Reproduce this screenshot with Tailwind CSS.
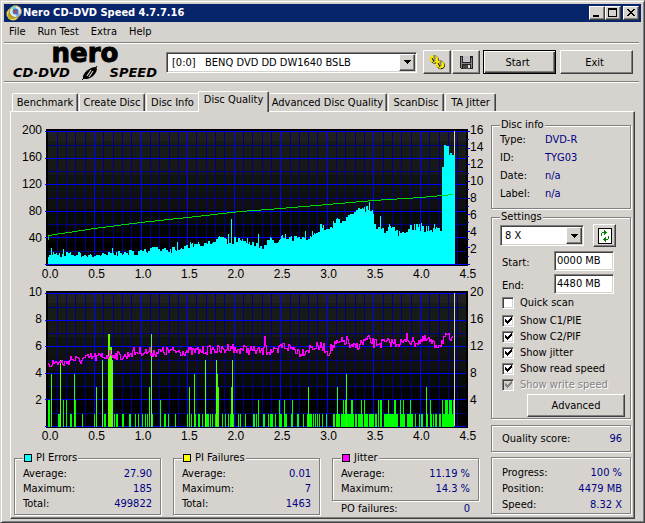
<!DOCTYPE html>
<html lang="en">
<head>
    <meta charset="UTF-8">
    <meta name="viewport" content="width=device-width, initial-scale=1.0">
    <title>Nero CD-DVD Speed 4.7.7.16</title>
    <script src="https://cdn.jsdelivr.net/npm/@tailwindcss/browser@4"></script>
</head>
<body class="bg-[#d6d3ce] font-['DejaVu_Sans_Condensed','DejaVu_Sans',sans-serif] text-[11px] leading-[14px] text-black">
<div class="flex min-h-screen flex-col border border-t-[#d6d3ce] border-l-[#d6d3ce] border-r-[#404040] border-b-[#404040] p-[3px] shadow-[inset_1px_1px_0_#fff,inset_-1px_-1px_0_#808080]">

    <!-- Title bar -->
    <header class="flex h-[18px] items-center bg-[#08246b] px-[2px] text-white">
        <svg class="h-4 w-4" viewBox="0 0 16 16">
            <circle cx="7" cy="9" r="6.5" fill="#e8d44c"/>
            <circle cx="6" cy="10" r="4" fill="#b8a020"/>
            <circle cx="9.500" cy="6.500" r="6" fill="#dfe8ee" stroke="#a08c20"/>
            <path d="M9.500 6.500L5 3a6 6 0 0 1 5-2z" fill="#7fd0c8"/>
            <path d="M9.500 6.500L14.500 9a6 6 0 0 1-4 3z" fill="#86a8e0"/>
            <circle cx="9.500" cy="6.500" r="3" fill="#3b74c0"/>
            <circle cx="9.500" cy="6.500" r="1.300" fill="#d83a20"/>
        </svg>
        <h1 class="flex-1 pl-px font-bold">Nero CD-DVD Speed 4.7.7.16</h1>
        <button aria-label="Minimize" class="h-[14px] w-4 border border-t-white border-l-white border-r-[#404040] border-b-[#404040] bg-[#d6d3ce] shadow-[inset_-1px_-1px_0_#808080]">
            <svg class="h-3 w-[14px]" viewBox="0 0 14 12" shape-rendering="crispEdges"><path d="M3 8h6v2H3z"/></svg>
        </button>
        <button aria-label="Maximize" class="h-[14px] w-4 border border-t-white border-l-white border-r-[#404040] border-b-[#404040] bg-[#d6d3ce] shadow-[inset_-1px_-1px_0_#808080]">
            <svg class="h-3 w-[14px]" viewBox="0 0 14 12" shape-rendering="crispEdges"><path d="M2 1h9v9H2zM3 3v6h7V3z" fill-rule="evenodd"/></svg>
        </button>
        <button aria-label="Close" class="ml-[2px] h-[14px] w-4 border border-t-white border-l-white border-r-[#404040] border-b-[#404040] bg-[#d6d3ce] shadow-[inset_-1px_-1px_0_#808080]">
            <svg class="h-3 w-[14px]" viewBox="0 0 14 12" shape-rendering="crispEdges"><path d="M3 2h2v1h1v1h2V3h1V2h2v1h-1v1H9v1H8v1h1v1h1v1h1v1H9V8H8V7H6v1H5v1H3V8h1V7h1V6h1V5H5V4H4V3H3z"/></svg>
        </button>
    </header>

    <nav class="flex h-5 items-center gap-3 px-[5px]">
        <button>File</button>
        <button>Run Test</button>
        <button>Extra</button>
        <button>Help</button>
    </nav>

    <!-- Toolbar -->
    <div class="mr-[2px] flex h-10 items-center border-y border-[#808080] pl-[9px] pr-[6px] shadow-[0_1px_0_#fff,inset_0_1px_0_#fff]">
        <div class="w-36 font-['DejaVu_Sans',sans-serif] font-bold">
            <div class="-mt-[2px] text-center text-[26px] leading-[22px] [-webkit-text-stroke:1px_#000]">nero</div>
            <div class="mt-[2px] flex h-[14px] items-center justify-between text-[13px] leading-[14px] italic">
                <span>CD·DVD</span>
                <svg class="h-[14px] w-4" viewBox="0 0 16 14">
                    <path d="M1 12C0 8 7 1 14 1c3 2-2 11-9 12-2 0-3 0-4-1z"/>
                    <path d="M9 4L5 10M11 5L7 11" stroke="#d6d3ce" stroke-width="1.200"/>
                    <path d="M0 14L4 10M12 4l3-4" stroke="#000"/>
                </svg>
                <span>SPEED</span>
            </div>
        </div>
        <div class="relative ml-[9px] h-[21px] flex-1">
            <select aria-label="Drive" class="h-full w-full appearance-none whitespace-pre border border-t-[#808080] border-l-[#808080] border-r-white border-b-white bg-white pt-[2px] pl-[5px] shadow-[inset_1px_1px_0_#404040,inset_-1px_-1px_0_#d6d3ce]">
                <option>[0:0] &nbsp; BENQ DVD DD DW1640 BSLB</option>
            </select>
            <span class="pointer-events-none absolute top-[2px] right-[2px] flex h-[17px] w-4 items-center justify-center border border-t-white border-l-white border-r-[#404040] border-b-[#404040] bg-[#d6d3ce] shadow-[inset_-1px_-1px_0_#808080]">
                <svg class="h-1 w-[7px]" viewBox="0 0 7 4" shape-rendering="crispEdges"><path d="M0 0h7v1H6v1H5v1H4v1H3V3H2V2H1V1H0z"/></svg>
            </span>
        </div>
        <button aria-label="Options" class="ml-[6px] flex h-6 w-7 items-center justify-center border border-t-white border-l-white border-r-[#404040] border-b-[#404040] shadow-[inset_-1px_-1px_0_#808080]">
            <svg class="h-4 w-[17px]" viewBox="0 0 17 16">
                <ellipse cx="5.500" cy="5.500" rx="4.500" ry="4" fill="#000" transform="rotate(30 5.500 5.500)"/>
                <ellipse cx="11.500" cy="11" rx="4.500" ry="4" fill="#000" transform="rotate(30 11.500 11)"/>
                <ellipse cx="5" cy="5" rx="4" ry="3.500" fill="#ffee00" stroke="#ffee00" stroke-dasharray="2 1" transform="rotate(30 5 5)"/>
                <ellipse cx="11" cy="10.500" rx="4" ry="3.500" fill="#ffee00" stroke="#ffee00" stroke-dasharray="2 1" transform="rotate(30 11 10.500)"/>
                <path d="M5.500 1v6M11.500 6v6" stroke="#848284" stroke-width="2"/>
                <path d="M3 4l2 4M9 9l2 4" stroke="#000" stroke-width="1"/>
            </svg>
        </button>
        <button aria-label="Save" class="ml-px flex h-6 w-7 items-center justify-center border border-t-white border-l-white border-r-[#404040] border-b-[#404040] shadow-[inset_-1px_-1px_0_#808080]">
            <svg class="h-[13px] w-[13px]" viewBox="0 0 13 13" shape-rendering="crispEdges">
                <path d="M0 0h13v13H1l-1-1z" fill="#222"/>
                <path d="M1 1h1v11H1zM11 2h1v10h-1z" fill="#848284"/>
                <path d="M3 0h7v6H3z" fill="#c6c3c6"/>
                <path d="M2 7h9v1H2z" fill="#848284"/>
                <path d="M3 9h7v4H3z" fill="#444"/>
                <path d="M8 9h2v3H8z" fill="#dedede"/>
            </svg>
        </button>
        <button class="ml-[3px] h-6 w-[73px] border border-black pt-px pr-1 shadow-[inset_1px_1px_0_#fff,inset_-1px_-1px_0_#404040,inset_-2px_-2px_0_#808080]">Start</button>
        <button class="ml-1 h-6 w-[73px] border border-t-white border-l-white border-r-[#404040] border-b-[#404040] pt-px pr-1 shadow-[inset_-1px_-1px_0_#808080]">Exit</button>
    </div>

    <!-- Tabs -->
    <div role="tablist" class="mt-[9px] flex h-5 items-end px-2 whitespace-nowrap">
        <button role="tab" class="h-[18px] w-[66px] rounded-t-xs border-t border-r border-l border-white border-r-[#404040] shadow-[inset_-1px_0_0_#808080]">Benchmark</button>
        <button role="tab" class="ml-px h-[18px] w-[66px] rounded-t-xs border-t border-r border-l border-white border-r-[#404040] shadow-[inset_-1px_0_0_#808080]">Create Disc</button>
        <button role="tab" class="ml-px h-[18px] w-[52px] rounded-tl-xs border-t border-l border-white">Disc Info</button>
        <button role="tab" aria-selected="true" class="relative -mb-px h-[21px] w-[71px] rounded-t-xs border-t border-r border-l border-white border-r-[#404040] bg-[#d6d3ce] pb-1 shadow-[inset_-1px_0_0_#808080]">Disc Quality</button>
        <button role="tab" class="h-[18px] w-[118px] rounded-t-xs border-t border-r border-white border-r-[#404040] shadow-[inset_-1px_0_0_#808080]">Advanced Disc Quality</button>
        <button role="tab" class="ml-px h-[18px] w-[56px] rounded-t-xs border-t border-r border-l border-white border-r-[#404040] shadow-[inset_-1px_0_0_#808080]">ScanDisc</button>
        <button role="tab" class="ml-px h-[18px] w-[51px] rounded-t-xs border-t border-r border-l border-white border-r-[#404040] shadow-[inset_-1px_0_0_#808080]">TA Jitter</button>
    </div>

    <main class="mr-[6px] ml-[6px] flex flex-1 border border-t-white border-l-white border-r-[#404040] border-b-[#404040] shadow-[inset_-1px_-1px_0_#808080]">
        <div class="flex flex-1 flex-col pt-[5px]">

            <!-- PI errors / read speed -->
            <div class="flex font-['Liberation_Sans',sans-serif] text-xs">
                <div class="w-[35px] pr-1 text-right leading-[27px]">
                    <div>200</div><div>160</div><div>120</div><div>80</div><div>40</div>
                </div>
                <svg id="errors" class="mt-3 h-[137px] flex-1 overflow-visible" viewBox="0 0 422 137" preserveAspectRatio="none" shape-rendering="crispEdges"></svg>
                <div class="mt-[5px] flex h-[134px] w-[23px] flex-col pl-[2px] leading-[17px]">
                    <div class="flex-1">16</div><div class="flex-1">14</div><div class="flex-1">12</div><div class="flex-1">10</div><div class="flex-1">8</div><div class="flex-1">6</div><div class="flex-1">4</div><div class="flex-1">2</div>
                </div>
            </div>
            <div class="grid h-[13px] grid-cols-10 pl-4 text-center font-['Liberation_Sans',sans-serif] text-xs leading-4">
                <span>0.0</span><span>0.5</span><span>1.0</span><span>1.5</span><span>2.0</span><span>2.5</span><span>3.0</span><span>3.5</span><span>4.0</span><span>4.5</span>
            </div>

            <!-- PI failures / jitter -->
            <div class="flex font-['Liberation_Sans',sans-serif] text-xs">
                <div class="w-[35px] pr-1 text-right leading-[27px]">
                    <div>10</div><div>8</div><div>6</div><div>4</div><div>2</div>
                </div>
                <svg id="failures" class="mt-3 h-[137px] flex-1 overflow-visible" viewBox="0 0 422 137" preserveAspectRatio="none" shape-rendering="crispEdges"></svg>
                <div class="w-[23px] pl-[2px] leading-[27px]">
                    <div>20</div><div>16</div><div>12</div><div>8</div><div>4</div>
                </div>
            </div>
            <div class="grid h-[13px] grid-cols-10 pl-4 text-center font-['Liberation_Sans',sans-serif] text-xs leading-4">
                <span>0.0</span><span>0.5</span><span>1.0</span><span>1.5</span><span>2.0</span><span>2.5</span><span>3.0</span><span>3.5</span><span>4.0</span><span>4.5</span>
            </div>

            <div class="mt-[10px] grid grid-cols-3 items-start gap-3 pr-3 pl-[3px]">
                <fieldset class="h-[64px] border border-[#808080] px-2 shadow-[1px_1px_0_#fff,inset_1px_1px_0_#fff]">
                    <legend class="flex items-center gap-1 bg-[#d6d3ce] px-px"><span class="h-2 w-2 border border-black bg-[#00ffff]"></span>PI Errors</legend>
                    <dl class="mt-px grid grid-cols-2 leading-[15px]">
                        <dt>Average:</dt><dd class="text-right text-[#000084]">27.90</dd>
                        <dt>Maximum:</dt><dd class="text-right text-[#000084]">185</dd>
                        <dt>Total:</dt><dd class="text-right text-[#000084]">499822</dd>
                    </dl>
                </fieldset>
                <fieldset class="h-[64px] border border-[#808080] px-2 shadow-[1px_1px_0_#fff,inset_1px_1px_0_#fff]">
                    <legend class="flex items-center gap-1 bg-[#d6d3ce] px-px"><span class="h-2 w-2 border border-black bg-[#ffff00]"></span>PI Failures</legend>
                    <dl class="mt-px grid grid-cols-2 leading-[15px]">
                        <dt>Average:</dt><dd class="text-right text-[#000084]">0.01</dd>
                        <dt>Maximum:</dt><dd class="text-right text-[#000084]">7</dd>
                        <dt>Total:</dt><dd class="text-right text-[#000084]">1463</dd>
                    </dl>
                </fieldset>
                <div>
                    <fieldset class="h-[50px] border border-[#808080] px-2 shadow-[1px_1px_0_#fff,inset_1px_1px_0_#fff]">
                        <legend class="flex items-center gap-1 bg-[#d6d3ce] px-px"><span class="h-2 w-2 border border-black bg-[#ff00ff]"></span>Jitter</legend>
                        <dl class="mt-px grid grid-cols-2 leading-[15px]">
                            <dt>Average:</dt><dd class="text-right text-[#000084]">11.19 %</dd>
                            <dt>Maximum:</dt><dd class="text-right text-[#000084]">14.3 %</dd>
                        </dl>
                    </fieldset>
                    <div class="flex justify-between px-[9px] pt-px"><span>PO failures:</span><span class="text-[#000084]">0</span></div>
                </div>
            </div>
        </div>

        <aside class="mr-[3px] flex w-[140px] flex-col pt-[6px]">
            <fieldset class="h-[91px] border border-[#808080] px-2 shadow-[1px_1px_0_#fff,inset_1px_1px_0_#fff]">
                <legend class="bg-[#d6d3ce] px-px">Disc info</legend>
                <dl class="-mt-px grid grid-cols-[45px_1fr] leading-[18px]">
                    <dt>Type:</dt><dd class="text-[#000084]">DVD-R</dd>
                    <dt>ID:</dt><dd class="text-[#000084]">TYG03</dd>
                    <dt>Date:</dt><dd class="text-[#000084]">n/a</dd>
                    <dt>Label:</dt><dd class="text-[#000084]">n/a</dd>
                </dl>
            </fieldset>

            <fieldset class="mt-px h-[209px] border border-[#808080] px-2 shadow-[1px_1px_0_#fff,inset_1px_1px_0_#fff]">
                <legend class="bg-[#d6d3ce] px-px">Settings</legend>
                <div class="flex items-center justify-between pr-[6px]">
                    <div class="relative h-[21px] w-[84px]">
                        <select aria-label="Speed" class="h-full w-full appearance-none border border-t-[#808080] border-l-[#808080] border-r-white border-b-white bg-white pl-1 shadow-[inset_1px_1px_0_#404040,inset_-1px_-1px_0_#d6d3ce]">
                            <option>8 X</option>
                        </select>
                        <span class="pointer-events-none absolute top-[2px] right-[2px] flex h-[17px] w-4 items-center justify-center border border-t-white border-l-white border-r-[#404040] border-b-[#404040] bg-[#d6d3ce] shadow-[inset_-1px_-1px_0_#808080]">
                            <svg class="h-1 w-[7px]" viewBox="0 0 7 4" shape-rendering="crispEdges"><path d="M0 0h7v1H6v1H5v1H4v1H3V3H2V2H1V1H0z"/></svg>
                        </span>
                    </div>
                    <button aria-label="Refresh" class="flex h-[23px] w-[23px] items-center justify-center border border-t-white border-l-white border-r-[#404040] border-b-[#404040] shadow-[inset_-1px_-1px_0_#808080]">
                        <svg class="h-4 w-[14px]" viewBox="0 0 14 16" shape-rendering="crispEdges">
                            <path d="M0 0h14v16H0z"/>
                            <path d="M1 1h12v14H1z" fill="#fff"/>
                            <path d="M3 5h1v3H3zM4 4h3v1H4zM6 2h1v5H6zM7 3h1v3H7zM8 4h1v1H8zM10 8h1v3h-1zM7 11h3v1H7zM7 9h1v5H7zM6 10h1v3H6zM5 11h1v1H5z" fill="#008200"/>
                        </svg>
                    </button>
                </div>
                <div class="mt-1 flex flex-col gap-[3px] pr-2 pl-[2px]">
                    <div class="flex items-center justify-between">
                        <label for="start" class="pt-1">Start:</label>
                        <input id="start" value="0000 MB" class="h-5 w-[60px] border border-t-[#808080] border-l-[#808080] border-r-white border-b-white bg-white pb-px pl-[2px] shadow-[inset_1px_1px_0_#404040,inset_-1px_-1px_0_#d6d3ce]">
                    </div>
                    <div class="flex items-center justify-between">
                        <label for="end" class="pt-1">End:</label>
                        <input id="end" value="4480 MB" class="h-5 w-[60px] border border-t-[#808080] border-l-[#808080] border-r-white border-b-white bg-white pb-px pl-[2px] shadow-[inset_1px_1px_0_#404040,inset_-1px_-1px_0_#d6d3ce]">
                    </div>
                </div>
                <div class="mt-px flex flex-col pl-[2px] leading-4">
                    <label class="mb-[2px] flex items-center gap-[6px]">
                        <input type="checkbox" class="h-3 w-3 appearance-none border border-t-[#808080] border-l-[#808080] border-r-white border-b-white bg-white shadow-[inset_1px_1px_0_#404040,inset_-1px_-1px_0_#d6d3ce]">
                        Quick scan
                    </label>
                    <label class="relative flex items-center gap-[6px]">
                        <input type="checkbox" checked class="peer h-3 w-3 appearance-none border border-t-[#808080] border-l-[#808080] border-r-white border-b-white bg-white shadow-[inset_1px_1px_0_#404040,inset_-1px_-1px_0_#d6d3ce]">
                        <svg class="pointer-events-none absolute top-1 left-[3px] hidden h-[7px] w-[7px] peer-checked:block" viewBox="0 0 7 7" shape-rendering="crispEdges"><path d="M0 2h1v1h1v1h1V3h1V2h1V1h1V0h1v3H6v1H5v1H4v1H3v1H2V6H1V5H0z"/></svg>
                        Show C1/PIE
                    </label>
                    <label class="relative flex items-center gap-[6px]">
                        <input type="checkbox" checked class="peer h-3 w-3 appearance-none border border-t-[#808080] border-l-[#808080] border-r-white border-b-white bg-white shadow-[inset_1px_1px_0_#404040,inset_-1px_-1px_0_#d6d3ce]">
                        <svg class="pointer-events-none absolute top-1 left-[3px] hidden h-[7px] w-[7px] peer-checked:block" viewBox="0 0 7 7" shape-rendering="crispEdges"><path d="M0 2h1v1h1v1h1V3h1V2h1V1h1V0h1v3H6v1H5v1H4v1H3v1H2V6H1V5H0z"/></svg>
                        Show C2/PIF
                    </label>
                    <label class="relative flex items-center gap-[6px]">
                        <input type="checkbox" checked class="peer h-3 w-3 appearance-none border border-t-[#808080] border-l-[#808080] border-r-white border-b-white bg-white shadow-[inset_1px_1px_0_#404040,inset_-1px_-1px_0_#d6d3ce]">
                        <svg class="pointer-events-none absolute top-1 left-[3px] hidden h-[7px] w-[7px] peer-checked:block" viewBox="0 0 7 7" shape-rendering="crispEdges"><path d="M0 2h1v1h1v1h1V3h1V2h1V1h1V0h1v3H6v1H5v1H4v1H3v1H2V6H1V5H0z"/></svg>
                        Show jitter
                    </label>
                    <label class="relative flex items-center gap-[6px]">
                        <input type="checkbox" checked class="peer h-3 w-3 appearance-none border border-t-[#808080] border-l-[#808080] border-r-white border-b-white bg-white shadow-[inset_1px_1px_0_#404040,inset_-1px_-1px_0_#d6d3ce]">
                        <svg class="pointer-events-none absolute top-1 left-[3px] hidden h-[7px] w-[7px] peer-checked:block" viewBox="0 0 7 7" shape-rendering="crispEdges"><path d="M0 2h1v1h1v1h1V3h1V2h1V1h1V0h1v3H6v1H5v1H4v1H3v1H2V6H1V5H0z"/></svg>
                        Show read speed
                    </label>
                    <label class="relative flex items-center gap-[6px] text-[#848284] text-shadow-[1px_1px_0_#fff]">
                        <input type="checkbox" checked disabled class="peer h-3 w-3 appearance-none border border-t-[#808080] border-l-[#808080] border-r-white border-b-white bg-[#d6d3ce] shadow-[inset_1px_1px_0_#404040,inset_-1px_-1px_0_#d6d3ce]">
                        <svg class="pointer-events-none absolute top-1 left-[3px] hidden h-[7px] w-[7px] peer-checked:block" viewBox="0 0 7 7" shape-rendering="crispEdges" fill="#848284"><path d="M0 2h1v1h1v1h1V3h1V2h1V1h1V0h1v3H6v1H5v1H4v1H3v1H2V6H1V5H0z"/></svg>
                        Show write speed
                    </label>
                </div>
                <button class="mt-px mr-[-3px] ml-auto block h-[23px] w-[98px] border border-t-white border-l-white border-r-[#404040] border-b-[#404040] shadow-[inset_-1px_-1px_0_#808080]">Advanced</button>
            </fieldset>

            <div class="mt-[6px] flex h-[27px] items-center justify-between border border-[#808080] pr-2 pl-[10px] shadow-[1px_1px_0_#fff,inset_1px_1px_0_#fff]">
                <span>Quality score:</span><span class="text-[#000084]">96</span>
            </div>

            <dl class="mt-[5px] grid h-[57px] grid-cols-2 content-end border border-[#808080] pr-2 pl-[10px] leading-4 shadow-[1px_1px_0_#fff,inset_1px_1px_0_#fff]">
                <dt>Progress:</dt><dd class="text-right text-[#000084]">100 %</dd>
                <dt>Position:</dt><dd class="text-right text-[#000084]">4479 MB</dd>
                <dt>Speed:</dt><dd class="text-right text-[#000084]">8.32 X</dd>
            </dl>
        </aside>
    </main>
</div>

<script>
    // Small seeded generator, so the graphs look the same on every load
    let seed = 7;
    function rnd() {
      seed = (seed * 16807) % 2147483647;
      return seed / 2147483647;
    }

    // Value at x between two neighbouring [x, y] points
    function at(points, x) {
      for (let i = 1; i < points.length; i++) {
        const [x0, y0] = points[i - 1];
        const [x1, y1] = points[i];
        if (x <= x1) return y0 + (y1 - y0) * (x - x0) / (x1 - x0);
      }
      return points[points.length - 1][1];
    }

    function rect(x, y, w, h, fill) {
      return `<rect x="${x}" y="${y}" width="${w}" height="${h}" fill="${fill}"/>`;
    }

    // Black plot with shaded bands and the blue grid
    function grid() {
      const bands = ['#212021', '#181c18', '#181818', '#101410', '#101010', '#080c08', '#040404', '#000000'];
      let out = rect(0, 0, 422, 137, '#000000');
      bands.forEach((color, i) => { out += rect(2, 3 + i * 17 - (i ? 8 : 0), 418, i ? 17 : 9, color); });
      for (let i = 0; i <= 45; i++) {
        if (i % 5) out += rect(Math.round(1.500 + i * 9.310), 2, 1, 134, '#000084');
      }
      for (let i = 0; i < 5; i++) out += rect(1, Math.round(15.500 + i * 26.600), 419, 1, '#000084');
      for (let i = 1; i < 9; i++) out += rect(Math.round(1.500 + i * 46.550), 2, 1, 134, '#0000ff');
      for (let i = 0; i < 6; i++) out += rect(-1, Math.round(2 + i * 26.600), 421, 1, '#0000ff');
      return out;
    }

    const errors = [[2,10],[40,9],[60,9],[75,11],[97,12],[107,14],[131,14],[140,17],[151,20],[164,21],[170,25],[180,23],[192,24],[200,23],[214,18],[217,18],[224,24],[231,20],[236,26],[261,24],[264,25],[266,31],[276,38],[282,32],[291,44],[304,46],[310,51],[317,52],[322,57],[326,56],[328,36],[334,38],[337,34],[344,38],[351,30],[364,37],[374,37],[387,33],[394,34],[395,34]];
    const errorPeaks = {5: 16, 17: 15, 66: 16, 131: 22, 172: 27, 182: 30, 185: 45, 212: 30, 259: 33, 334: 48, 375: 41, 388: 40};
    const speed = [[2,106],[48,99],[94,93],[141,88],[194,82],[234,79],[281,75],[327,71],[374,68],[407,65]];

    let svg = grid();
    let height = 10;
    for (let x = 2; x < 409; x++) {
      if (x % 2 === 0 || rnd() > 0.700) {
        const base = x < 396 ? at(errors, x) : x < 398 ? 92 : 114;
        height = Math.round(base + (rnd() - 0.450) * (x > 397 ? 12 : 5 + base / 12));
      }
      svg += rect(x, 135 - (errorPeaks[x] || height), 1, errorPeaks[x] || height, '#00ffff');
    }
    svg += rect(2, 106, 1, 5, '#00d700');
    for (let x = 2; x < 407; x++) svg += rect(x, Math.round(at(speed, x)), 1, 1, '#00d700');
    svg += rect(408, 2, 1, 24, '#d6d3ce');
    for (let i = 0; i <= 16; i++) svg += rect(421, Math.round(135 - i * 8.310), i % 2 ? 2 : 3, 1, '#0000ff');
    document.getElementById('errors').innerHTML = svg;

    // [x, failures, width]
    const failures = [[2,2,2],[5,4],[12,1,2],[14,5],[17,2],[20,2],[24,1,2],[28,4],[29,2],[36,1],[48,1],[50,3],[56,5],[58,1,2],[62,7,2],[64,6,2],[66,5],[68,1],[70,1,2],[76,1,2],[83,1,2],[89,1],[92,1],[96,1],[99,1],[101,1],[103,3],[105,7],[106,1],[114,2],[118,1,2],[122,1],[129,1],[141,1],[143,3],[145,1],[148,4],[149,1],[152,1,2],[156,1],[159,5],[160,1,3],[164,1],[166,1],[169,1],[170,5],[171,4],[172,3],[176,1],[179,1],[182,1],[184,1],[185,3],[186,5],[187,1],[192,1],
      [194,1],[199,1],[207,1,2],[210,1],[212,2],[217,1,2],[222,1],[224,1,3],[229,1],[233,2],[234,1,2],[238,2],[239,1,2],[245,1],[246,2],[251,1,2],[257,1],[261,1],[262,3],[263,1,2],[265,1],[267,1],[269,1],[271,1],[273,1],[276,1],[280,1],[287,1,2],[290,1],[291,3],[292,1,2],[295,1,2],[297,2],[298,1],[299,2],[300,4],[301,1,4],[305,2,2],[307,1],[309,1,2],[312,1,3],[315,2],[316,1],[318,2],[319,1,3],[323,1,5],[329,1,2],[332,2],[334,2,2],[338,1,10],[342,2],[348,2,2],[350,1,2],[354,2],[355,1,2],[357,2],[358,1],[361,1,3],[364,2],[365,1,2],[369,1],[373,1],[375,1,2],[380,3],[381,1],[384,2],[385,1],[387,1],[389,1,2],[393,1,2],[396,2],[397,1,2],[399,2,3],[402,1],[403,2,3],[406,1],[407,2]];
    const jitter = [[2,72],[11,71],[19,72],[24,67],[31,69],[44,66],[57,65],[64,62],[71,64],[79,65],[84,61],[94,60],[107,61],[114,60],[131,60],[147,60],[164,58],[177,59],[184,54],[189,60],[194,57],[214,60],[217,60],[218,41],[219,52],[220,59],[231,61],[234,54],[247,57],[254,61],[264,56],[276,55],[281,61],[287,54],[294,51],[301,49],[304,57],[311,54],[321,48],[327,52],[344,51],[359,51],[360,39],[361,48],[367,51],[381,48],[387,54],[394,52],[397,46],[404,47],[407,51]];

    svg = grid();
    for (const [x, n, w] of failures) {
      const h = Math.round(n * 13.300);
      svg += rect(x, 136 - h, w || 1, h, n > 4 ? '#63ff00' : n > 2 ? '#31ff00' : '#00ff00');
    }
    let last = 72;
    for (let x = 2; x < 407; x++) {
      const y = Math.round(at(jitter, x) + (rnd() - 0.500) * 9);
      svg += rect(x, Math.min(y, last), 1, Math.abs(y - last) + 1, '#ff00ff');
      last = y;
    }
    svg += rect(408, 2, 1, 133, '#d6d3ce');
    document.getElementById('failures').innerHTML = svg;
</script>
</body>
</html>
